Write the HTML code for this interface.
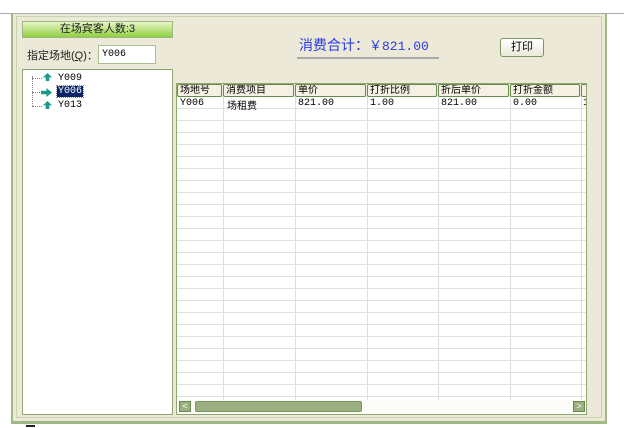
<html><head><style>
body{margin:0;width:624px;height:428px;background:#fff;position:relative;overflow:hidden;font-family:"Liberation Sans","Noto Sans CJK SC",sans-serif;font-size:11px}
.abs{position:absolute}
.h{box-sizing:border-box;border:1px solid #6a8a50;border-radius:2px;background:#f5f0e4;margin-right:1px;padding-left:2px;line-height:11px;white-space:nowrap;overflow:hidden}
</style></head><body>
<div class="abs" style="left:0;top:13px;width:624px;height:1px;background:#aaa"></div>
<div class="abs" style="left:11px;top:14px;width:596px;height:410px;background:#a0b884"></div>
<div class="abs" style="left:13px;top:14px;width:592px;height:407px;background:#ece9d8"></div>
<div class="abs" style="left:16px;top:16px;width:586px;height:402px;border:1px solid #c8d4b0;box-sizing:border-box"></div>
<div class="abs" style="left:22px;top:21px;width:151px;height:17px;background:linear-gradient(#e8f5c8,#8fd040);border:1px solid #9ab880;box-sizing:border-box;text-align:center;line-height:15px;color:#222;font-size:11px">在场宾客人数:3</div>
<div class="abs" style="left:27px;top:47px;font-size:11px;color:#222">指定场地(<u>Q</u>)：</div>
<div class="abs" style="left:98px;top:45px;width:58px;height:19px;background:#fff;border:1px solid #a8c090;box-sizing:border-box;font-family:'Liberation Mono',monospace;font-size:10px;line-height:17px;padding-left:3px">Y006</div>
<div class="abs" style="left:22px;top:69px;width:151px;height:346px;background:#fff;border:1px solid #8fa870;box-sizing:border-box"></div>
<div class="abs" style="left:32px;top:76px;width:1px;height:30px;border-left:1px dotted #888"></div>
<div class="abs" style="left:32px;top:78px;width:10px;border-top:1px dotted #888"></div>
<div class="abs" style="left:32px;top:92px;width:10px;border-top:1px dotted #888"></div>
<div class="abs" style="left:32px;top:106px;width:10px;border-top:1px dotted #888"></div>
<div class="abs" style="left:43px;top:73px;width:9px;height:8px;background:#1a9a8a;clip-path:polygon(50% 0,100% 55%,70% 55%,70% 100%,30% 100%,30% 55%,0 55%)"></div>
<div class="abs" style="left:41px;top:88px;width:11px;height:9px;background:#1a9a8a;clip-path:polygon(0 30%,50% 30%,50% 0,100% 50%,50% 100%,50% 70%,0 70%)"></div>
<div class="abs" style="left:43px;top:101px;width:9px;height:8px;background:#1a9a8a;clip-path:polygon(50% 0,100% 55%,70% 55%,70% 100%,30% 100%,30% 55%,0 55%)"></div>
<div class="abs" style="left:58px;top:73px;font-family:'Liberation Mono',monospace;font-size:10px">Y009</div>
<div class="abs" style="left:57px;top:86px;padding:0 1px;background:#0a246a;color:#fff;font-family:'Liberation Mono',monospace;font-size:10px;outline:1px dotted #888">Y006</div>
<div class="abs" style="left:58px;top:100px;font-family:'Liberation Mono',monospace;font-size:10px">Y013</div>
<div class="abs" style="left:299px;top:35px;color:#2a3ae8;font-size:14px">消费合计：<span style="font-family:'Liberation Mono','Noto Sans CJK SC',monospace;font-size:13px">￥821.00</span></div>
<div class="abs" style="left:297px;top:57px;width:142px;height:2px;background:#aaa"></div>
<div class="abs" style="left:500px;top:38px;width:44px;height:19px;border:1px solid #7a9a60;border-radius:3px;background:linear-gradient(#fff,#ece9d8);box-sizing:border-box;text-align:center;line-height:17px;font-size:11px">打印</div>
<div class="abs" style="left:176px;top:83px;width:411px;height:332px;background:#fff;border:1px solid #8fa870;box-sizing:border-box;overflow:hidden">
 <div class="abs" style="left:0;top:13px;width:411px;height:304px;background:repeating-linear-gradient(to bottom,transparent 0,transparent 11px,#e0e0e0 11px,#e0e0e0 12px)"></div>
 <div class="abs" style="left:0;top:0;width:411px;height:13px;background:#ece9d8"></div>
</div>
<div class="abs" style="left:177px;top:84px;width:409px;height:316px;font-size:10px;overflow:hidden">
 <div style="position:absolute;left:0;top:0;height:13px;display:flex">
  <div class="h" style="width:45px">场地号</div>
  <div class="h" style="width:71px">消费项目</div>
  <div class="h" style="width:71px">单价</div>
  <div class="h" style="width:70px">打折比例</div>
  <div class="h" style="width:71px">折后单价</div>
  <div class="h" style="width:70px">打折金额</div>
  <div class="h" style="width:8px"></div>
 </div>
 <div class="abs" style="left:46px;top:13px;width:1px;height:303px;background:#ddd"></div>
 <div class="abs" style="left:118px;top:13px;width:1px;height:303px;background:#ddd"></div>
 <div class="abs" style="left:190px;top:13px;width:1px;height:303px;background:#ddd"></div>
 <div class="abs" style="left:261px;top:13px;width:1px;height:303px;background:#ddd"></div>
 <div class="abs" style="left:333px;top:13px;width:1px;height:303px;background:#ddd"></div>
 <div class="abs" style="left:404px;top:13px;width:1px;height:303px;background:#ddd"></div>
 <div class="abs" style="left:3px;top:14px;font-family:'Liberation Mono',monospace">Y006</div>
 <div class="abs" style="left:50px;top:13px">场租费</div>
 <div class="abs" style="left:121px;top:14px;font-family:'Liberation Mono',monospace">821.00</div>
 <div class="abs" style="left:193px;top:14px;font-family:'Liberation Mono',monospace">1.00</div>
 <div class="abs" style="left:264px;top:14px;font-family:'Liberation Mono',monospace">821.00</div>
 <div class="abs" style="left:336px;top:14px;font-family:'Liberation Mono',monospace">0.00</div>
 <div class="abs" style="left:406px;top:14px;font-family:'Liberation Mono',monospace">1</div>
</div>
<div class="abs" style="left:177px;top:400px;width:409px;height:14px;background:#fbfbf8"></div>
<div class="abs" style="left:179px;top:401px;width:12px;height:11px;background:#9ab080;border:1px solid #6a8a50;box-sizing:border-box;color:#fff;font-size:9px;line-height:9px;text-align:center">&lt;</div>
<div class="abs" style="left:195px;top:401px;width:167px;height:11px;background:#9ab080;border:1px solid #7a9a60;border-radius:2px;box-sizing:border-box"></div>
<div class="abs" style="left:573px;top:401px;width:12px;height:11px;background:#9ab080;border:1px solid #6a8a50;box-sizing:border-box;color:#fff;font-size:9px;line-height:9px;text-align:center">&gt;</div>
<div class="abs" style="left:26px;top:425px;width:9px;height:2px;background:#222"></div>
</body></html>
